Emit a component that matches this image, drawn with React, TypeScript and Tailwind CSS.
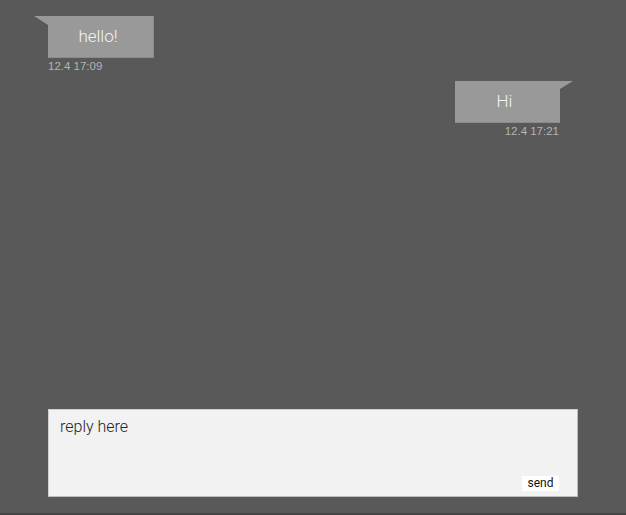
import React from 'react';

type Msg = { text: string; time: string; mine: boolean };

const messages: Msg[] = [
  { text: 'hello!', time: '12.4 17:09', mine: false },
  { text: 'Hi', time: '12.4 17:21', mine: true },
];

const Bubble = ({ msg }: { msg: Msg }) => {
  if (msg.mine) {
    return (
      <div className="flex flex-col items-end">
        <div className="relative w-[105px] h-[42px] bg-[#999999] border-b border-[#8c8c8c] flex items-center justify-center pr-[6px] text-[17px] font-light text-[#f4f4f4]">
          {msg.text}
          <svg className="absolute -right-[13px] top-0" width="13" height="8" viewBox="0 0 13 8">
            <polygon points="0,0 13,0 0,8" fill="#999999" />
          </svg>
        </div>
        <p className="mt-[1px] mr-[1px] text-[11.5px] leading-[14px] text-[#b4b4b4] font-['Liberation_Sans',sans-serif]">{msg.time}</p>
      </div>
    );
  }
  return (
    <div className="flex flex-col items-start">
      <div className="relative w-[106px] h-[42px] bg-[#999999] border-b border-r border-[#8c8c8c] flex items-center justify-center pr-[5px] text-[17px] font-light text-[#f4f4f4]">
        {msg.text}
        <svg className="absolute -left-[14px] top-0" width="14" height="9" viewBox="0 0 14 9">
          <polygon points="0,0 14,0 14,9" fill="#999999" />
        </svg>
      </div>
      <p className="mt-[1px] text-[11.5px] leading-[14px] text-[#b4b4b4] font-['Liberation_Sans',sans-serif]">{msg.time}</p>
    </div>
  );
};

const App = () => {
  return (
    <div className="h-[515px] w-full bg-[#595959] border-b-2 border-[#464646] flex flex-col font-['Roboto','Liberation_Sans',sans-serif]">
      <div className="flex-1 pl-[48px] pr-[66px] pt-[16px]">
        <Bubble msg={messages[0]} />
        <div className="mt-[8px]">
          <Bubble msg={messages[1]} />
        </div>
      </div>
      <div className="mx-[48px] mb-[16px] h-[88px] bg-[#f2f2f2] border border-[#d0d0d0] border-b-[#bdbdbd] border-r-[#bdbdbd] flex flex-col justify-between pl-[11px] pr-[18px] pt-[5px] pb-[5px]">
        <p className="text-[16px] font-light text-[#222222]">reply here</p>
        <div className="flex justify-end">
          <button className="w-[37px] h-[15px] bg-white text-[12px] leading-[15px] text-[#111111]">send</button>
        </div>
      </div>
    </div>
  );
};

export default App;
